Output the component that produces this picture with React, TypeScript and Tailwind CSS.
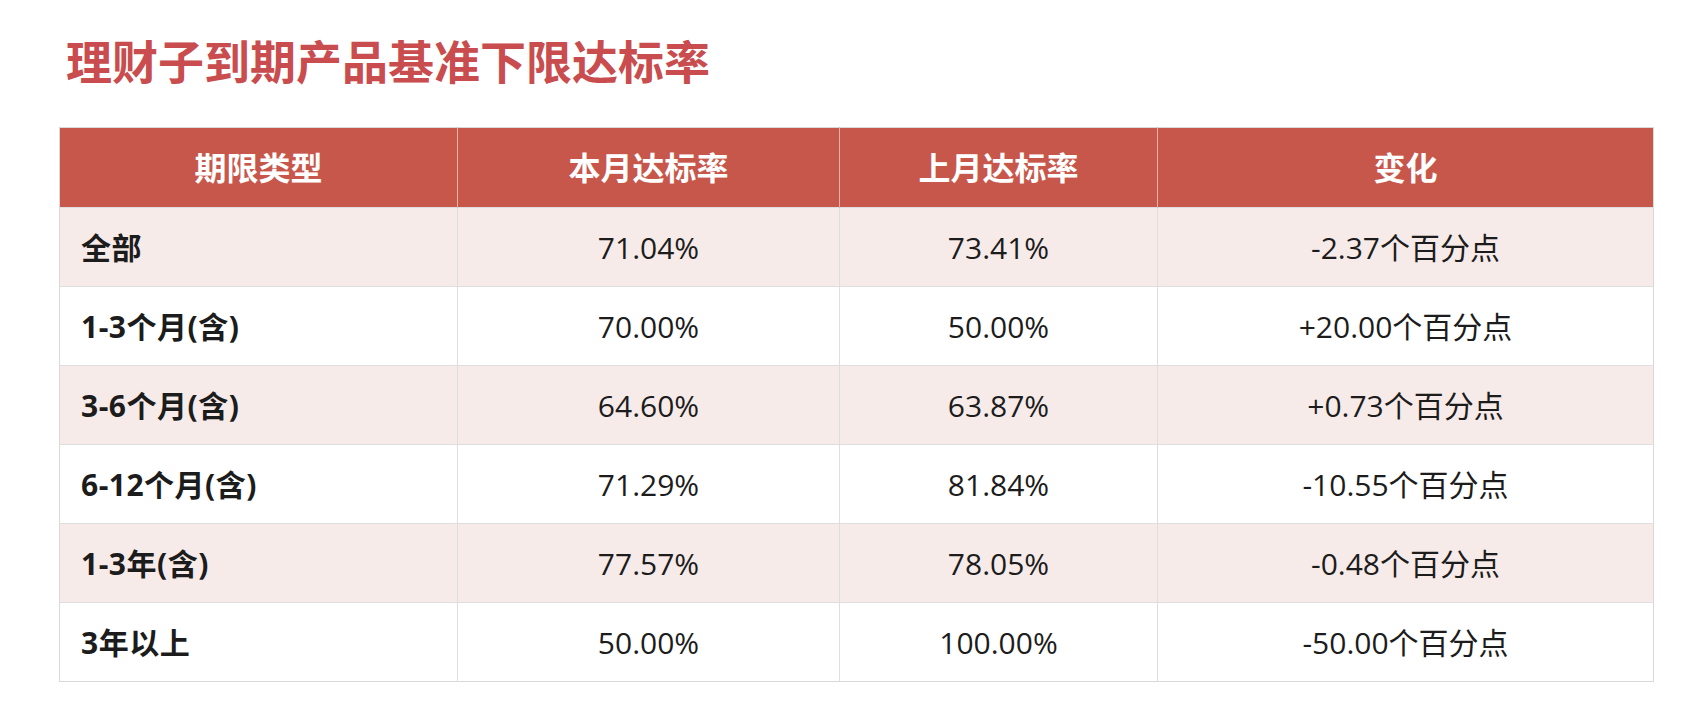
import React from "react";

type Row = {
  term: string;
  current: string;
  last: string;
  change: string;
};

const rows: Row[] = [
  { term: "全部", current: "71.04%", last: "73.41%", change: "-2.37个百分点" },
  { term: "1-3个月(含)", current: "70.00%", last: "50.00%", change: "+20.00个百分点" },
  { term: "3-6个月(含)", current: "64.60%", last: "63.87%", change: "+0.73个百分点" },
  { term: "6-12个月(含)", current: "71.29%", last: "81.84%", change: "-10.55个百分点" },
  { term: "1-3年(含)", current: "77.57%", last: "78.05%", change: "-0.48个百分点" },
  { term: "3年以上", current: "50.00%", last: "100.00%", change: "-50.00个百分点" },
];

const headers = ["期限类型", "本月达标率", "上月达标率", "变化"];

export default function App() {
  return (
    <div
      className="min-h-[720px] w-[1685px] bg-white pl-[59px] pt-[35px] text-[#1c1c1c]"
      style={{ fontFamily: '"Open Sans", "Noto Sans CJK SC", sans-serif' }}
    >
      <h1 className="pl-[7px] text-[46px] font-bold leading-[52px] text-[#c94c4e]">
        理财子到期产品基准下限达标率
      </h1>

      <table className="mt-[40px] w-[1594px] table-fixed border-collapse border border-[#d9d9d9]">
        <colgroup>
          <col className="w-[398px]" />
          <col className="w-[382px]" />
          <col className="w-[318px]" />
          <col className="w-[496px]" />
        </colgroup>
        <thead>
          <tr className="h-[80px] bg-[#c8574b]">
            {headers.map((h, i) => (
              <th
                key={h}
                className={
                  "text-center text-[32px] font-bold text-white " +
                  (i > 0 ? "border-l border-[#e9b2a9]" : "")
                }
              >
                {h}
              </th>
            ))}
          </tr>
        </thead>
        <tbody>
          {rows.map((row, idx) => (
            <tr
              key={row.term}
              className={
                "h-[79px] border-t border-[#dedede] " +
                (idx % 2 === 0 ? "bg-[#f7ebe9]" : "bg-white")
              }
            >
              <td className="pl-[21px] text-[30px] font-bold tracking-[0.5px]">
                {row.term}
              </td>
              <td className="border-l border-[#dedede] text-center text-[30px]">
                {row.current}
              </td>
              <td className="border-l border-[#dedede] text-center text-[30px]">
                {row.last}
              </td>
              <td className="border-l border-[#dedede] text-center text-[30px]">
                {row.change}
              </td>
            </tr>
          ))}
        </tbody>
      </table>
    </div>
  );
}
